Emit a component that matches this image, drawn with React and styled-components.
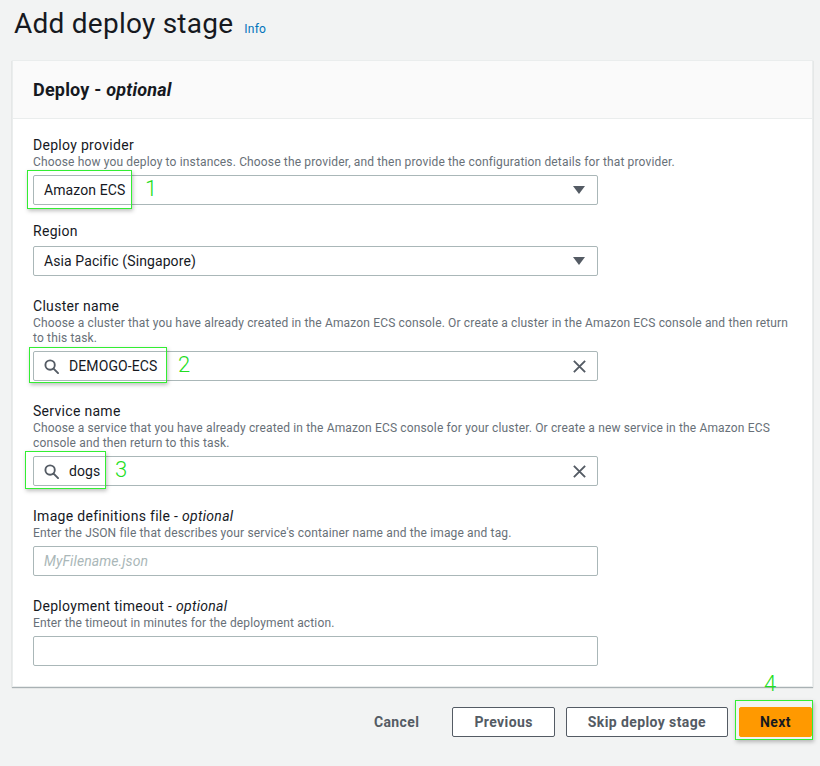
import React from 'react'
import styled, { createGlobalStyle } from 'styled-components'

const FONT = `Roboto, "Noto Sans", Arial, sans-serif`

const GlobalStyle = createGlobalStyle`
  html, body {
    margin: 0;
    padding: 0;
    background: #f2f3f3;
    font-family: ${FONT};
    color: #16191f;
  }
  * { box-sizing: border-box; }
`

const Page = styled.div`
  position: relative;
  width: 820px;
  min-height: 766px;
  padding: 6px 7px 0 12px;
`

const TitleRow = styled.div`
  display: flex;
  align-items: baseline;
  gap: 11px;
  padding-left: 2px;
  margin-bottom: 18px;

  h1 {
    margin: 0;
    font-size: 28px;
    line-height: 36px;
    font-weight: 400;
    letter-spacing: 0.25px;
    color: #16191f;
  }

  a {
    font-size: 12px;
    font-weight: 400;
    letter-spacing: 0.2px;
    color: #0073bb;
    text-decoration: none;
  }
`

const Panel = styled.section`
  background: #fff;
  border: 1px solid #eaeded;
  box-shadow: 0 1px 1px 0 rgba(0, 28, 36, 0.3);
`

const PanelHeader = styled.header`
  display: flex;
  align-items: center;
  height: 58px;
  padding: 0 20px;
  background: #fafafa;
  border-bottom: 1px solid #eaeded;

  h2 {
    margin: 0;
    font-size: 18px;
    font-weight: 700;
    line-height: 22px;
    letter-spacing: 0.2px;
  }

  em {
    font-style: italic;
  }
`

const PanelBody = styled.div`
  padding: 16px 20px 20px;
  display: flex;
  flex-direction: column;
`

const Field = styled.div`
  display: flex;
  flex-direction: column;
  margin-bottom: ${({ $gap }) => $gap ?? 20}px;
  &:last-child { margin-bottom: 0; }
`

const Label = styled.label`
  font-size: 14px;
  line-height: 20px;
  letter-spacing: 0.3px;
  color: #16191f;

  em { font-style: italic; }
`

const Hint = styled.p`
  margin: 0;
  font-size: 12px;
  line-height: 15px;
  letter-spacing: 0.15px;
  color: #687078;
`

const Control = styled.div`
  display: flex;
  align-items: center;
  gap: 10px;
  width: 565px;
  height: 30px;
  margin-top: 5px;
  padding: 0 10px;
  background: #fff;
  border: 1px solid #aab7b8;
  border-radius: 2px;
  font-size: 14px;
  letter-spacing: 0.1px;
  color: #16191f;
`

const Value = styled.span`
  flex: 1;
  white-space: nowrap;
  color: ${({ $placeholder }) => ($placeholder ? '#aab7b8' : '#16191f')};
  font-style: ${({ $placeholder }) => ($placeholder ? 'italic' : 'normal')};
`

const Caret = styled.span`
  width: 0;
  height: 0;
  margin-right: 2px;
  border-left: 6px solid transparent;
  border-right: 6px solid transparent;
  border-top: 8px solid #545b64;
`

const Actions = styled.div`
  display: flex;
  justify-content: flex-end;
  align-items: center;
  gap: 11px;
  margin-top: 20px;
  padding-right: 1px;
`

const Button = styled.button`
  height: 30px;
  padding: 0 ${({ $variant }) => ($variant === 'primary' ? 20 : 21)}px;
  font-family: ${FONT};
  font-size: 14px;
  font-weight: 700;
  letter-spacing: 0.4px;
  border-radius: 2px;
  cursor: pointer;
  color: ${({ $variant }) => ($variant === 'primary' ? '#16191f' : '#545b64')};
  background: ${({ $variant }) =>
    $variant === 'primary' ? '#f90' : $variant === 'link' ? 'transparent' : '#fff'};
  border: 1px solid
    ${({ $variant }) =>
      $variant === 'primary' ? '#f90' : $variant === 'link' ? 'transparent' : '#545b64'};
`

const Marker = styled.div`
  position: absolute;
  border: 1px solid #33ee33;
  box-shadow: 1px 2px 4px rgba(0, 0, 0, 0.25);
  pointer-events: none;
`

const MarkerNum = styled.span`
  position: absolute;
  font-family: ${FONT};
  font-size: 22px;
  line-height: 22px;
  font-weight: 300;
  color: #22dd22;
`

const SearchIcon = () => (
  <svg width="15" height="15" viewBox="0 0 16 16" fill="none" stroke="#545b64" strokeWidth="2">
    <circle cx="6.5" cy="6.5" r="5" />
    <path d="M10.2 10.2L15 15" strokeLinecap="round" />
  </svg>
)

const ClearIcon = () => (
  <svg width="15" height="15" viewBox="0 0 16 16" fill="none" stroke="#545b64" strokeWidth="2">
    <path d="M2 2l12 12M14 2L2 14" />
  </svg>
)

const markers = [
  { box: [27, 170, 105, 39], num: '1', at: [145, 178] },
  { box: [29, 347, 138, 36], num: '2', at: [178, 354] },
  { box: [25, 451, 81, 38], num: '3', at: [115, 459] },
  { box: [735, 700, 78, 40], num: '4', at: [764, 673] },
]

export default function App() {
  return (
    <>
      <GlobalStyle />
      <Page>
        <TitleRow>
          <h1>Add deploy stage</h1>
          <a href="#info">Info</a>
        </TitleRow>

        <Panel>
          <PanelHeader>
            <h2>
              Deploy - <em>optional</em>
            </h2>
          </PanelHeader>
          <PanelBody>
            <Field $gap={16}>
              <Label>Deploy provider</Label>
              <Hint>
                Choose how you deploy to instances. Choose the provider, and then provide the
                configuration details for that provider.
              </Hint>
              <Control>
                <Value>Amazon ECS</Value>
                <Caret />
              </Control>
            </Field>

            <Field>
              <Label>Region</Label>
              <Control>
                <Value>Asia Pacific (Singapore)</Value>
                <Caret />
              </Control>
            </Field>

            <Field>
              <Label>Cluster name</Label>
              <Hint>
                Choose a cluster that you have already created in the Amazon ECS console. Or create
                a cluster in the Amazon ECS console and then return to this task.
              </Hint>
              <Control>
                <SearchIcon />
                <Value>DEMOGO-ECS</Value>
                <ClearIcon />
              </Control>
            </Field>

            <Field>
              <Label>Service name</Label>
              <Hint>
                Choose a service that you have already created in the Amazon ECS console for your
                cluster. Or create a new service in the Amazon ECS console and then return to this
                task.
              </Hint>
              <Control>
                <SearchIcon />
                <Value>dogs</Value>
                <ClearIcon />
              </Control>
            </Field>

            <Field>
              <Label>
                Image definitions file - <em>optional</em>
              </Label>
              <Hint>
                Enter the JSON file that describes your service's container name and the image and
                tag.
              </Hint>
              <Control>
                <Value $placeholder>MyFilename.json</Value>
              </Control>
            </Field>

            <Field>
              <Label>
                Deployment timeout - <em>optional</em>
              </Label>
              <Hint>Enter the timeout in minutes for the deployment action.</Hint>
              <Control />
            </Field>
          </PanelBody>
        </Panel>

        <Actions>
          <Button $variant="link">Cancel</Button>
          <Button>Previous</Button>
          <Button>Skip deploy stage</Button>
          <Button $variant="primary">Next</Button>
        </Actions>

        {markers.map((m) => (
          <React.Fragment key={m.num}>
            <Marker
              style={{ left: m.box[0], top: m.box[1], width: m.box[2], height: m.box[3] }}
            />
            <MarkerNum style={{ left: m.at[0], top: m.at[1] }}>{m.num}</MarkerNum>
          </React.Fragment>
        ))}
      </Page>
    </>
  )
}
